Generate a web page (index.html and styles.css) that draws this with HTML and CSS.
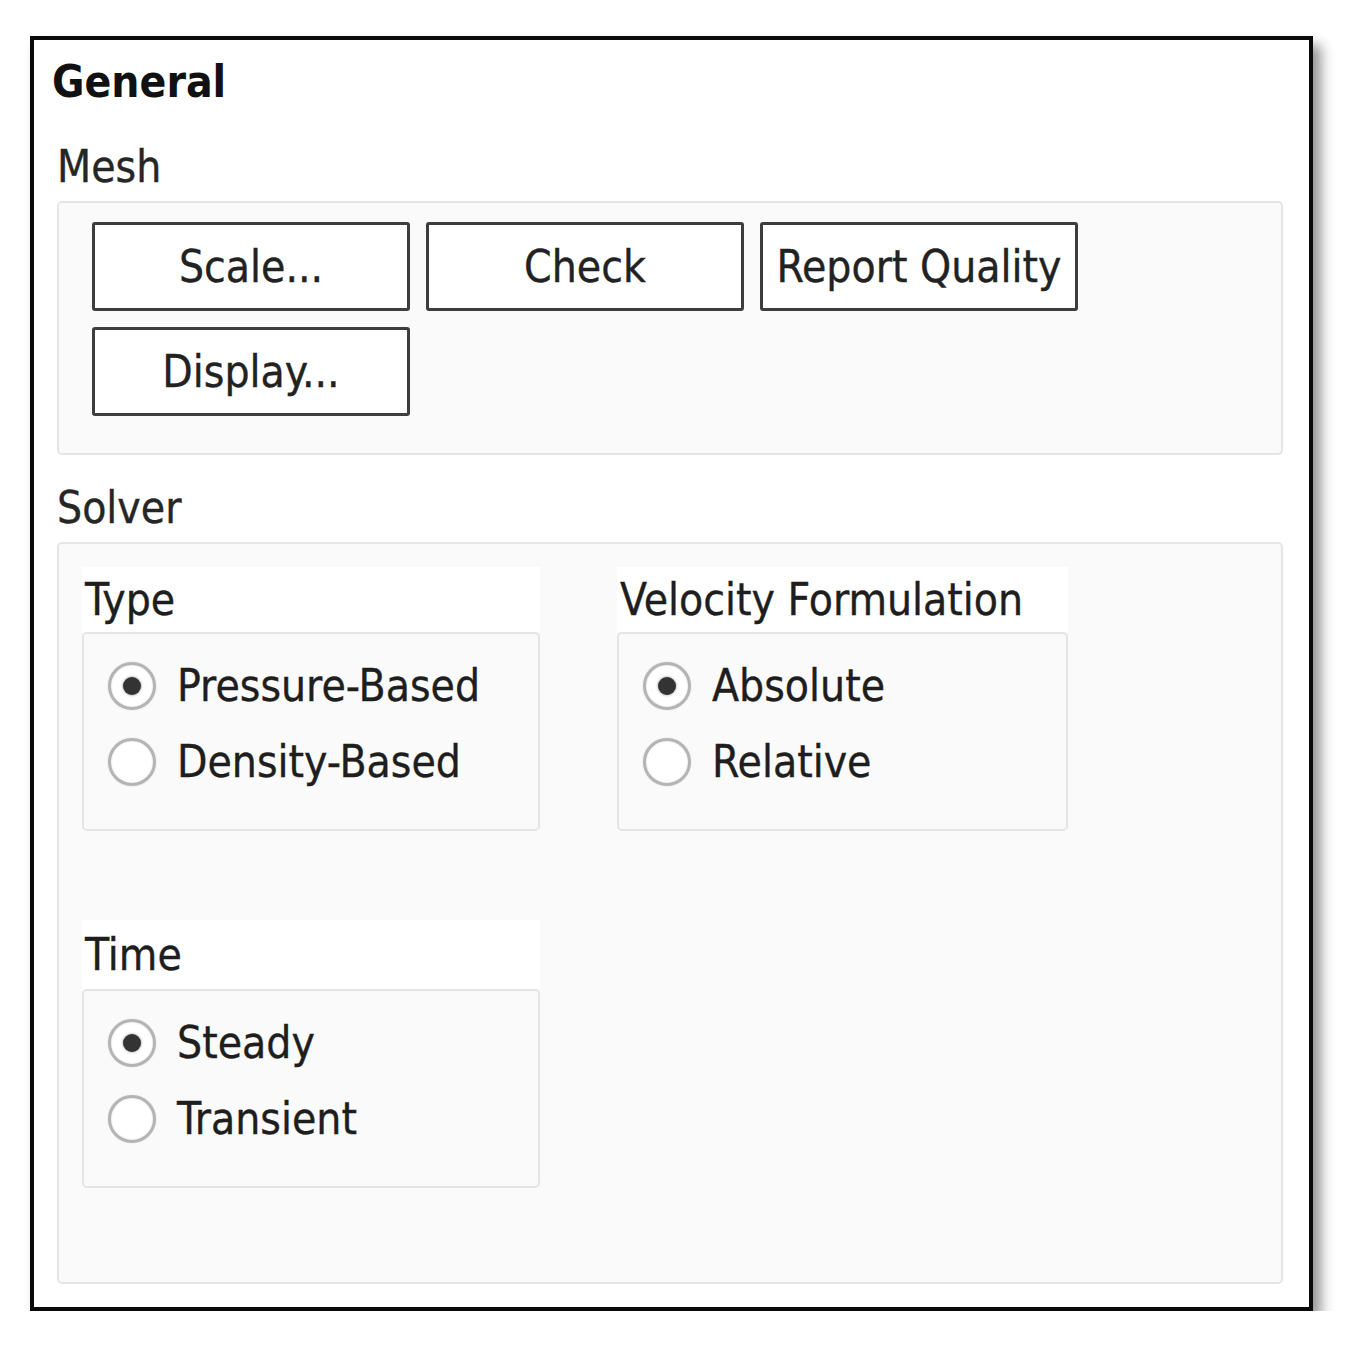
FILE: index.html
```html
<!DOCTYPE html>
<html lang="en">
<head>
<meta charset="utf-8">
<title>General</title>
<link rel="stylesheet" href="styles.css">
</head>
<body>
<div class="frame">
  <div class="title">General</div>

  <div class="section-label">Mesh</div>
  <div class="groupbox mesh-box">
    <div class="button-grid">
      <div class="btn">Scale...</div>
      <div class="btn">Check</div>
      <div class="btn">Report Quality</div>
      <div class="btn">Display...</div>
    </div>
  </div>

  <div class="section-label section-gap">Solver</div>
  <div class="groupbox solver-box">
    <div class="solver-grid">
      <div class="group">
        <div class="group-label">Type</div>
        <div class="radio-box">
          <div class="radio-row"><span class="radio checked"></span><span class="radio-text">Pressure-Based</span></div>
          <div class="radio-row"><span class="radio"></span><span class="radio-text">Density-Based</span></div>
        </div>
      </div>
      <div class="group">
        <div class="group-label">Velocity Formulation</div>
        <div class="radio-box">
          <div class="radio-row"><span class="radio checked"></span><span class="radio-text">Absolute</span></div>
          <div class="radio-row"><span class="radio"></span><span class="radio-text">Relative</span></div>
        </div>
      </div>
      <div class="group">
        <div class="group-label time-label">Time</div>
        <div class="radio-box">
          <div class="radio-row"><span class="radio checked"></span><span class="radio-text">Steady</span></div>
          <div class="radio-row"><span class="radio"></span><span class="radio-text">Transient</span></div>
        </div>
      </div>
    </div>
  </div>
</div>
</body>
</html>
```

FILE: styles.css
```css
html, body {
  margin: 0;
  padding: 0;
  background: #ffffff;
}

body {
  font-family: "DejaVu Sans Condensed", "DejaVu Sans", sans-serif;
  font-stretch: condensed;
  font-size: 44px;
  color: #1e1e1e;
  -webkit-text-stroke: 0.35px currentColor;
}

.frame {
  box-sizing: border-box;
  margin: 36px 0 0 30px;
  width: 1283px;
  border: 4px solid #0a0a0a;
  background: #ffffff;
  padding: 16px 26px 23px 23px;
  box-shadow: 8px 9px 12px rgba(0, 0, 0, 0.42);
}

.title {
  font-weight: bold;
  line-height: 51px;
  margin-left: -5px;
  color: #111111;
  -webkit-text-stroke: 0;
}

.section-label {
  line-height: 50px;
  margin-top: 35px;
  margin-bottom: 9px;
  color: #262626;
}

.section-gap {
  margin-top: 28px;
}

.groupbox {
  border: 2px solid #e5e5e5;
  border-radius: 5px;
  background: #fafafa;
}

.mesh-box {
  padding: 19px 30px 37px 33px;
}

.button-grid {
  display: grid;
  grid-template-columns: repeat(3, 318px);
  gap: 16px;
}

.btn {
  box-sizing: border-box;
  height: 89px;
  border: 3px solid #3d3d3d;
  border-radius: 3px;
  background: #ffffff;
  display: flex;
  align-items: center;
  justify-content: center;
  line-height: 50px;
  color: #222222;
}

.solver-box {
  padding: 23px 20px 94px 23px;
}

.solver-grid {
  display: grid;
  grid-template-columns: 458px 451px;
  column-gap: 77px;
  row-gap: 89px;
  align-items: start;
}

.group-label {
  background: #ffffff;
  line-height: 50px;
  padding: 8px 0 7px 3px;
  color: #1e1e1e;
}

.time-label {
  padding-top: 10px;
  padding-bottom: 9px;
}

.radio-box {
  box-sizing: border-box;
  height: 199px;
  border: 2px solid #e5e5e5;
  border-radius: 5px;
  background: #fafafa;
  padding: 14px 0 0 24px;
  display: flex;
  flex-direction: column;
}

.radio-row {
  height: 76px;
  display: flex;
  align-items: center;
  gap: 21px;
}

.radio {
  box-sizing: border-box;
  flex: 0 0 auto;
  width: 48px;
  height: 48px;
  border: 3px solid #b4b4b4;
  border-radius: 50%;
  background: #ffffff;
  display: flex;
  align-items: center;
  justify-content: center;
  box-shadow: inset 0 0 2px rgba(0, 0, 0, 0.15), 0 0 2px rgba(0, 0, 0, 0.12);
}

.radio.checked::after {
  content: "";
  width: 18px;
  height: 18px;
  border-radius: 50%;
  background: #333333;
  box-shadow: 0 0 3px rgba(0, 0, 0, 0.45);
}

.radio-text {
  line-height: 50px;
  color: #1e1e1e;
}
```
